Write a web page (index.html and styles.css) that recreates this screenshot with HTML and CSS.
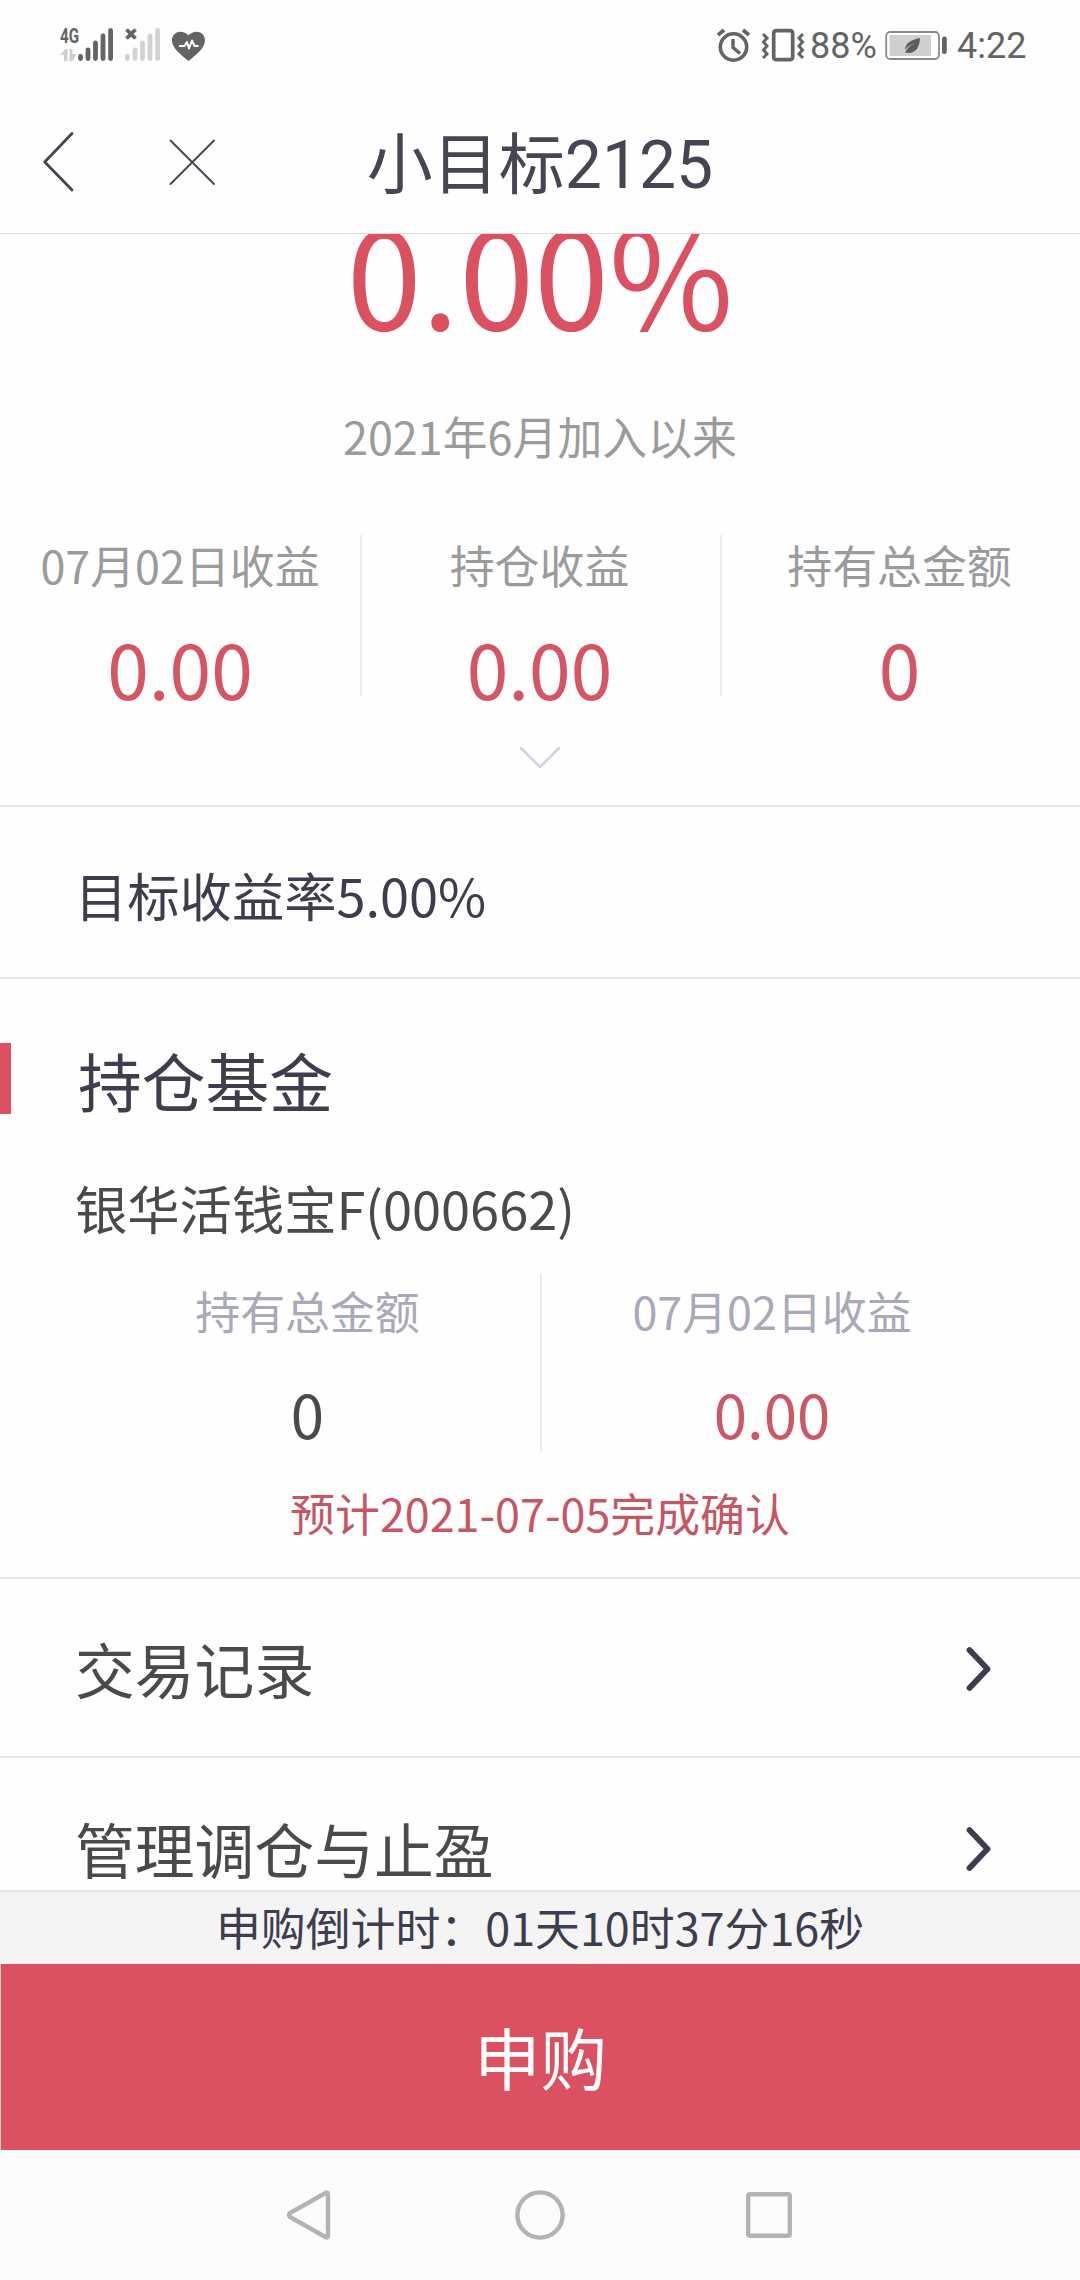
FILE: index.html
```html
<!DOCTYPE html>
<html lang="zh-CN">
<head>
<meta charset="utf-8">
<title>小目标2125</title>
<link rel="stylesheet" href="styles.css">
</head>
<body>
<div class="screen">
  <div class="status">
    <svg class="status-left" width="150" height="40" viewBox="58 22 150 40">
      <text class="net" x="60" y="42.500" textLength="19" lengthAdjust="spacingAndGlyphs">4G</text>
      <path d="M60 55l5.500-6H67.500v12h-3.500v-6zM69.500 49h3v5h4l-4 7h-3z" fill="#cecece"/>
      <g stroke="#646464" stroke-width="4.800" stroke-linecap="round">
        <path d="M80.500 56.500v2M88 50v8.500M95.500 43v15.500M103 36v22.500M110.600 30.500v28"/>
      </g>
      <g stroke="#d2d2d2" stroke-width="4.800" stroke-linecap="round">
        <path d="M127.400 56.500v2M135 50v8.500M142.500 43v15.500M150 36v22.500M157.600 30.500v28"/>
      </g>
      <path d="M126.500 29.500l9 9M135.500 29.500l-9 9" stroke="#646464" stroke-width="3.800"/>
      <path d="M188.500 61C181 55 172 48 172 40.500C172 31 183 29 188.500 35.500C194 29 205 31 205 40.500C205 48 196 55 188.500 61z" fill="#646464"/>
      <path d="M179 46h5.500l2.500-4 2 6.500 3-8 2.500 5.500h4" fill="none" stroke="#fff" stroke-width="2" stroke-linejoin="round"/>
    </svg>
    <div class="status-right">
      <svg width="90" height="36" viewBox="716 26 90 36" fill="none" stroke="#646464">
        <circle cx="733.500" cy="47" r="13.200" stroke-width="3.600"/>
        <path d="M733 39v8.500l7 6" stroke-width="3.400"/>
        <path d="M718 35l6-5M749 35l-6-5" stroke-width="3.600"/>
        <rect x="773.700" y="30.700" width="19" height="29" rx="2.500" stroke-width="3.700"/>
        <path d="M763 34l4 4-3.500 4 3.500 4-3.500 4 3.500 4-4 4M803 34l-4 4 3.500 4-3.500 4 3.500 4-3.500 4 4 4" stroke-width="3"/>
      </svg>
      <span class="percent">88%</span>
      <svg class="battery" width="62" height="30" viewBox="885 31 62 30">
        <rect x="886.200" y="32" width="52.800" height="27" rx="4" fill="none" stroke="#8a8a8a" stroke-width="1.800"/>
        <rect x="889.500" y="35" width="41.500" height="21" fill="#cfcfcf"/>
        <path d="M920 38c-10 2-15 6-15 12 3-4 7-6 10-7-4 2-8 5-10 9.500 9 2 14.500-3 15-14.500z" fill="#5c5c5c"/>
        <rect x="942" y="36.500" width="4.800" height="17.500" rx="2.300" fill="#646464"/>
      </svg>
      <span class="clock">4:22</span>
    </div>
  </div>

  <header class="titlebar">
    <svg width="180" height="70" viewBox="40 128 180 70" fill="none" stroke="#454553" stroke-linecap="round" stroke-linejoin="round">
      <path d="M72 133.500L44.700 162L72 190" stroke-width="2.800"/>
      <path d="M170.500 140.500l43.500 43.500M214 140.500L170.500 184" stroke-width="1.900"/>
    </svg>
    <h1 class="title">小目标2125</h1>
  </header>

  <main class="content">
    <section class="summary">
      <div class="rate">0.00%</div>
      <div class="since">2021年6月加入以来</div>
      <div class="stats">
        <div class="stat"><span class="label">07月02日收益</span><span class="stat-value">0.00</span></div>
        <div class="stat"><span class="label">持仓收益</span><span class="stat-value">0.00</span></div>
        <div class="stat"><span class="label">持有总金额</span><span class="stat-value">0</span></div>
      </div>
      <svg class="expand" width="44" height="24" viewBox="0 0 44 24" fill="none" stroke="#d2d2e2" stroke-width="2.600" stroke-linecap="round">
        <path d="M3 2l19 19L41 2"/>
      </svg>
    </section>

    <section class="target">目标收益率5.00%</section>

    <section class="holding">
      <h2 class="holding-title">持仓基金</h2>
      <div class="fund">银华活钱宝F(000662)</div>
      <div class="fund-stats">
        <div class="fund-stat"><span class="label muted">持有总金额</span><span class="fund-value">0</span></div>
        <div class="fund-stat"><span class="label muted">07月02日收益</span><span class="fund-value gain">0.00</span></div>
      </div>
      <div class="notice">预计2021-07-05完成确认</div>
    </section>

    <div class="row"><span>交易记录</span>
      <svg width="26" height="46" viewBox="0 0 26 46"><path d="M3.500 4L21.500 23L3.500 42" class="arrow"/></svg>
    </div>
    <div class="row"><span>管理调仓与止盈</span>
      <svg width="26" height="46" viewBox="0 0 26 46"><path d="M3.500 4L21.500 23L3.500 42" class="arrow"/></svg>
    </div>
  </main>

  <div class="countdown">申购倒计时：01天10时37分16秒</div>
  <div class="buy">申购</div>

  <nav class="navbar">
    <svg width="50" height="54" viewBox="0 0 50 54"><path d="M41.500 5Q44 3.500 44 6.500V47.500Q44 50.500 41.500 49L6 29Q4 27 6 25z"/></svg>
    <svg width="54" height="54" viewBox="0 0 54 54"><circle cx="28" cy="27" r="22.600"/></svg>
    <svg width="50" height="54" viewBox="0 0 50 54"><rect x="4.200" y="6.200" width="41.600" height="41.600" rx="1.500"/></svg>
  </nav>
</div>
</body>
</html>
```
FILE: styles.css
```css
* { box-sizing: border-box; }

body {
  margin: 0;
  font-family: "Noto Sans CJK SC", sans-serif;
  background: #fefefe;
}

svg { display: block; flex: none; }

.screen {
  width: 1080px;
  height: 2280px;
  display: flex;
  flex-direction: column;
  overflow: hidden;
}

/* system status bar */
.status {
  height: 92px;
  flex: none;
  display: flex;
  justify-content: space-between;
  padding: 22px 53px 0 58px;
  font-family: Roboto, sans-serif;
  font-size: 36px;
  line-height: 40px;
  color: #646464;
}
.net { font: 700 20px Roboto, sans-serif; fill: #646464; }
.status-right { display: flex; padding-top: 4px; }
.percent { width: 79px; padding-left: 4px; }
.battery { margin-top: 5px; }
.clock { width: 80px; padding-left: 10px; white-space: nowrap; }

/* page header */
.titlebar {
  height: 142px;
  flex: none;
  display: grid;
  grid-template-columns: 330px 1fr 330px;
  padding-top: 36px;
  border-bottom: 1px solid #dcdcdc;
}
.titlebar svg { margin-left: 40px; }
.title {
  margin: 0;
  font: 400 66px/76px Roboto, "Noto Sans CJK SC", sans-serif;
  color: #454553;
  text-align: center;
}

.content { flex: 1; min-height: 0; overflow: hidden; }

/* yield summary */
.summary {
  height: 573px;
  border-bottom: 2px solid #e6e6e6;
  text-align: center;
  display: flex;
  flex-direction: column;
  align-items: center;
}
.rate { margin-top: -33px; font-size: 135px; line-height: 140px; color: #db5161; }
.since { margin-top: 65px; font-size: 44.9px; line-height: 60px; color: #9b9b9b; }
.stats {
  align-self: stretch;
  margin-top: 69px;
  height: 161px;
  display: grid;
  grid-template-columns: repeat(3, 1fr);
  grid-template-rows: 161px;
}
.stat { display: flex; flex-direction: column; align-items: center; }
.stat + .stat { border-left: 2px solid #ececec; padding-right: 3px; }
.label { font-size: 44.9px; line-height: 60px; color: #9b9b9b; }
.stat-value { margin-top: 28px; font-size: 75px; line-height: 90px; color: #d55564; }
.expand { margin-top: 50px; }

.target {
  height: 172px;
  padding: 52px 75px 0;
  border-bottom: 2px solid #e6e6e6;
  font-size: 52.3px;
  line-height: 70px;
  color: #3e3d4e;
}

/* fund holding */
.holding { height: 600px; border-bottom: 2px solid #e6e6e6; padding-top: 64px; }
.holding-title {
  margin: 0;
  height: 71px;
  padding-left: 67px;
  border-left: 11px solid #db5161;
  font-weight: 400;
  font-size: 63.75px;
  line-height: 73px;
  color: #3e3d4e;
}
.fund { margin-top: 58px; padding-left: 75px; font-size: 52.3px; line-height: 70px; color: #4a4a4a; }
.fund-stats {
  margin: 32px 75px 0;
  height: 179px;
  display: grid;
  grid-template-columns: 1fr 1fr;
  grid-template-rows: 179px;
}
.fund-stat { display: flex; flex-direction: column; align-items: center; padding-top: 7px; }
.fund-stat + .fund-stat { border-left: 2px solid #ececec; padding-right: 3px; }
.muted { color: #a9a9b7; }
.fund-value { margin-top: 32px; font-size: 60px; line-height: 80px; color: #4a4a4a; }
.gain { color: #cc5766; }
.notice { margin-top: 30px; text-align: center; font-size: 44.9px; line-height: 60px; color: #c75664; }

/* link rows */
.row {
  height: 179px;
  display: flex;
  align-items: center;
  justify-content: space-between;
  padding: 2px 88px 0 75px;
  border-bottom: 2px solid #e6e6e6;
  font-size: 59.8px;
  line-height: 80px;
  color: #4a4a4a;
}
.row span { margin-top: -2px; }
.row + .row { height: 182px; }
.arrow { fill: none; stroke: #3e3d4e; stroke-width: 5.8; stroke-linecap: round; stroke-linejoin: round; }

/* purchase footer */
.countdown {
  height: 74px;
  flex: none;
  border-top: 2px solid #e4e4e4;
  background: #f4f4f5;
  text-align: center;
  font-size: 44.9px;
  line-height: 69px;
  color: #3e3d4e;
}
.buy {
  height: 186px;
  flex: none;
  background: #db5161;
  border-left: 1px solid #f0d5d9;
  color: #fff;
  text-align: center;
  font-size: 66.5px;
  line-height: 184px;
}

/* system navigation */
.navbar {
  height: 130px;
  flex: none;
  background: #fcfcfc;
  display: flex;
  justify-content: space-between;
  padding: 38px 286px 0 284px;
  fill: none;
  stroke: #b3b3b3;
  stroke-width: 4.4;
}
```
